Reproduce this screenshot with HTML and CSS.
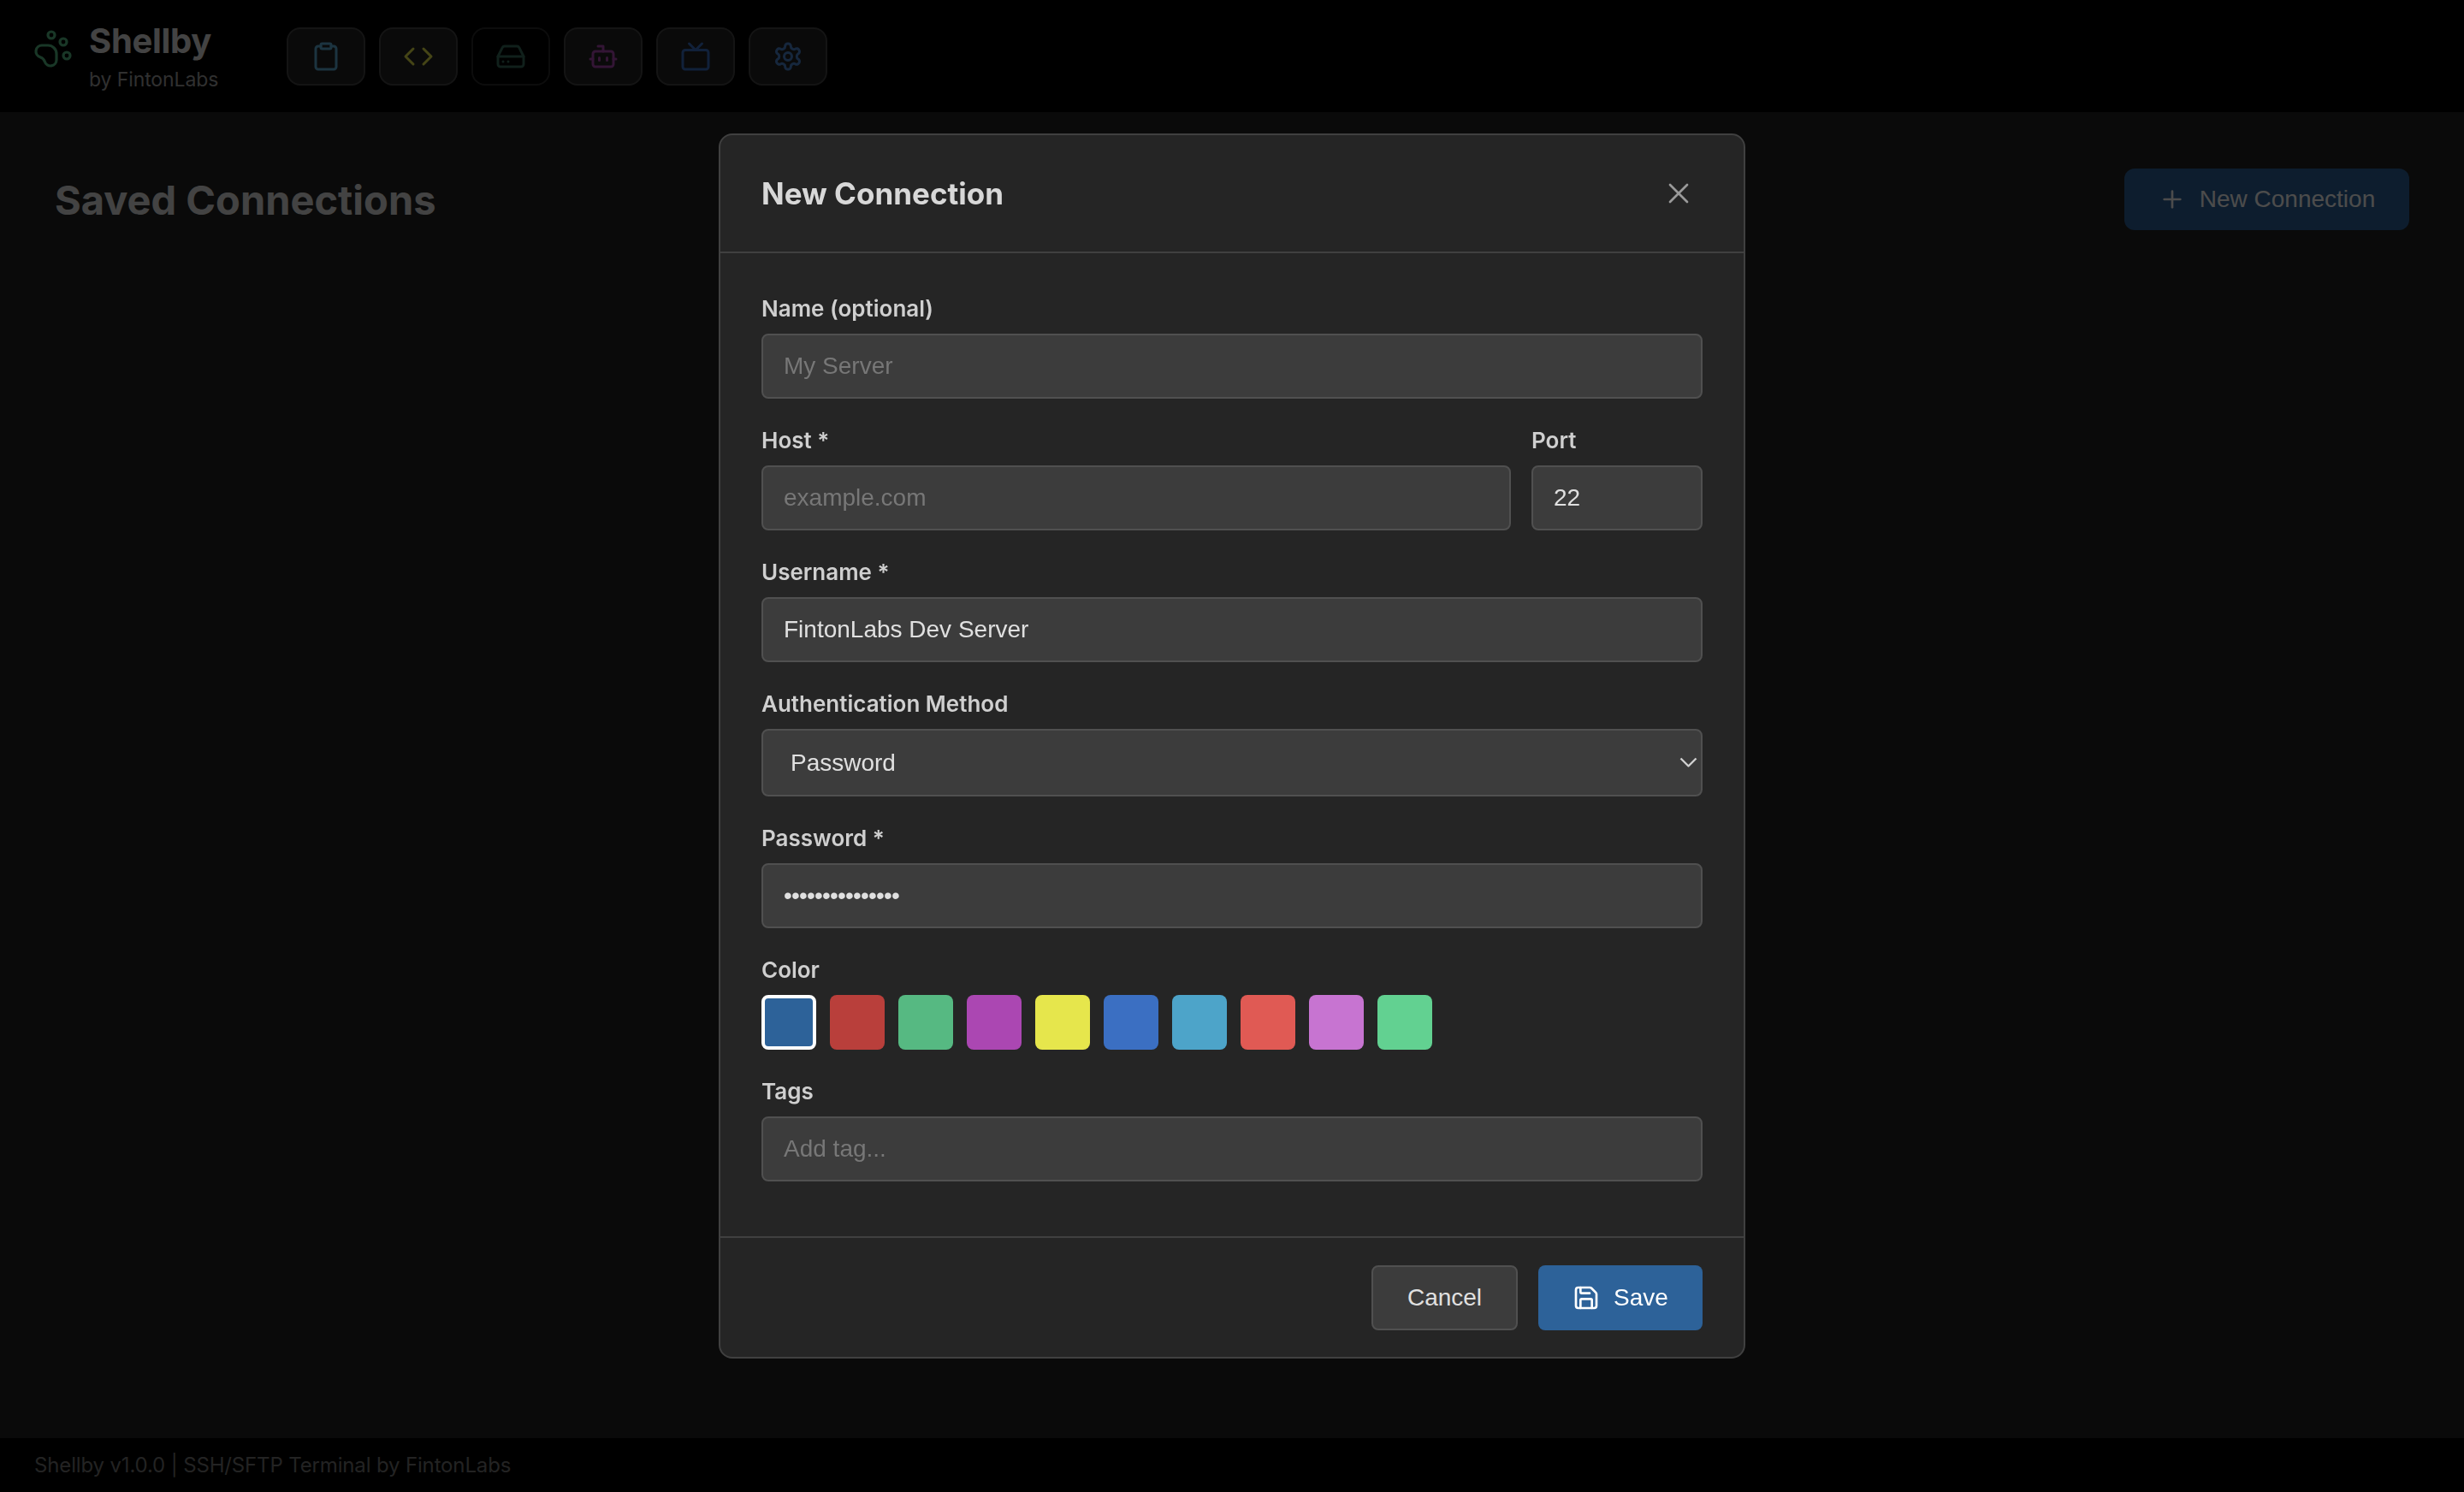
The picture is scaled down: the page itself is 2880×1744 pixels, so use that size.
FILE: index.html
```html
<!DOCTYPE html>
<html lang="en">
<head>
  <meta charset="UTF-8">
  <title>Shellby</title>
  <link rel="stylesheet" href="styles.css">
</head>
<body>

<div class="app">
  <header class="top-bar">
    <div class="brand">
      <svg class="brand-icon" viewBox="0 0 24 24"><circle cx="11" cy="4" r="2"/><circle cx="18" cy="8" r="2"/><circle cx="20" cy="16" r="2"/><path d="M9 10a5 5 0 0 1 5 5v3.5a3.5 3.5 0 0 1-6.84 1.045Q6.52 17.48 4.46 16.84A3.5 3.5 0 0 1 5.5 10Z"/></svg>
      <div class="brand-text">
        <div class="brand-name">Shellby</div>
        <div class="brand-sub">by FintonLabs</div>
      </div>
    </div>
    <nav class="tool-nav">
      <a class="tool-btn tool-clip"><svg viewBox="0 0 24 24"><rect x="8" y="2" width="8" height="4" rx="1"/><path d="M16 4h2a2 2 0 0 1 2 2v14a2 2 0 0 1-2 2H6a2 2 0 0 1-2-2V6a2 2 0 0 1 2-2h2"/></svg></a>
      <a class="tool-btn tool-code"><svg viewBox="0 0 24 24"><polyline points="16 18 22 12 16 6"/><polyline points="8 6 2 12 8 18"/></svg></a>
      <a class="tool-btn tool-drive is-active"><svg viewBox="0 0 24 24"><line x1="22" y1="12" x2="2" y2="12"/><path d="M5.45 5.11 2 12v6a2 2 0 0 0 2 2h16a2 2 0 0 0 2-2v-6l-3.45-6.89A2 2 0 0 0 16.76 4H7.24a2 2 0 0 0-1.79 1.11z"/><line x1="6" y1="16" x2="6.01" y2="16"/><line x1="10" y1="16" x2="10.01" y2="16"/></svg></a>
      <a class="tool-btn tool-bot"><svg viewBox="0 0 24 24"><path d="M12 8V4H8"/><rect x="4" y="8" width="16" height="12" rx="2"/><path d="M2 14h2"/><path d="M20 14h2"/><path d="M15 13v2"/><path d="M9 13v2"/></svg></a>
      <a class="tool-btn tool-tv"><svg viewBox="0 0 24 24"><rect x="2" y="7" width="20" height="15" rx="2"/><polyline points="17 2 12 7 7 2"/></svg></a>
      <a class="tool-btn tool-gear"><svg viewBox="0 0 24 24"><path d="M12.22 2h-.44a2 2 0 0 0-2 2v.18a2 2 0 0 1-1 1.73l-.43.25a2 2 0 0 1-2 0l-.15-.08a2 2 0 0 0-2.73.73l-.22.38a2 2 0 0 0 .73 2.73l.15.1a2 2 0 0 1 1 1.72v.51a2 2 0 0 1-1 1.74l-.15.09a2 2 0 0 0-.73 2.73l.22.38a2 2 0 0 0 2.73.73l.15-.08a2 2 0 0 1 2 0l.43.25a2 2 0 0 1 1 1.73V20a2 2 0 0 0 2 2h.44a2 2 0 0 0 2-2v-.18a2 2 0 0 1 1-1.73l.43-.25a2 2 0 0 1 2 0l.15.08a2 2 0 0 0 2.73-.73l.22-.39a2 2 0 0 0-.73-2.73l-.15-.08a2 2 0 0 1-1-1.74v-.5a2 2 0 0 1 1-1.74l.15-.09a2 2 0 0 0 .73-2.73l-.22-.38a2 2 0 0 0-2.73-.73l-.15.08a2 2 0 0 1-2 0l-.43-.25a2 2 0 0 1-1-1.73V4a2 2 0 0 0-2-2z"/><circle cx="12" cy="12" r="3"/></svg></a>
    </nav>
  </header>

  <main class="content">
    <h1>Saved Connections</h1>
    <button class="btn btn-primary btn-new"><svg class="btn-icon" viewBox="0 0 24 24"><path d="M5 12h14"/><path d="M12 5v14"/></svg>New Connection</button>
  </main>

  <footer class="status-bar">Shellby v1.0.0 | SSH/SFTP Terminal by FintonLabs</footer>
</div>

<!-- modal -->
<div class="overlay">
  <form class="modal">
    <div class="modal-head">
      <h2>New Connection</h2>
      <svg class="modal-close" viewBox="0 0 24 24"><path d="M18 6 6 18"/><path d="m6 6 12 12"/></svg>
    </div>

    <div class="modal-body">
      <div class="field">
        <label>Name (optional)</label>
        <input type="text" placeholder="My Server">
      </div>
      <div class="field-row">
        <div class="field field-grow">
          <label>Host *</label>
          <input type="text" placeholder="example.com">
        </div>
        <div class="field field-port">
          <label>Port</label>
          <input type="text" value="22">
        </div>
      </div>
      <div class="field">
        <label>Username *</label>
        <input type="text" value="FintonLabs Dev Server">
      </div>
      <div class="field">
        <label>Authentication Method</label>
        <div class="select-wrap">
          <select><option>Password</option></select>
          <svg class="select-arrow" viewBox="5 8 14 8"><path d="m6 9 6 6 6-6"/></svg>
        </div>
      </div>
      <div class="field">
        <label>Password *</label>
        <input type="password" value="aaaaaaaaaaaaaaa">
      </div>
      <div class="field">
        <label>Color</label>
        <div class="swatches">
          <span class="swatch swatch-blue is-selected"></span>
          <span class="swatch swatch-red"></span>
          <span class="swatch swatch-green"></span>
          <span class="swatch swatch-purple"></span>
          <span class="swatch swatch-yellow"></span>
          <span class="swatch swatch-royal"></span>
          <span class="swatch swatch-cyan"></span>
          <span class="swatch swatch-coral"></span>
          <span class="swatch swatch-pink"></span>
          <span class="swatch swatch-mint"></span>
        </div>
      </div>
      <div class="field">
        <label>Tags</label>
        <input type="text" placeholder="Add tag...">
      </div>
    </div>

    <div class="modal-foot">
      <button type="button" class="btn btn-cancel">Cancel</button>
      <button type="button" class="btn btn-primary btn-save"><svg class="btn-icon" viewBox="0 0 24 24"><path d="M15.2 3a2 2 0 0 1 1.4.6l3.8 3.8a2 2 0 0 1 .6 1.4V19a2 2 0 0 1-2 2H5a2 2 0 0 1-2-2V5a2 2 0 0 1 2-2z"/><path d="M17 21v-7a1 1 0 0 0-1-1H8a1 1 0 0 0-1 1v7"/><path d="M7 3v4a1 1 0 0 0 1 1h7"/></svg>Save</button>
    </div>
  </form>
</div>

</body>
</html>
```

FILE: styles.css
```css
* { box-sizing: border-box; }
html, body { height: 100%; }
body {
  margin: 0;
  background: #222;
  color: #e0e0e0;
  font-family: "Liberation Sans", Arial, sans-serif;
  font-size: 28px;
}
svg {
  fill: none;
  stroke: currentColor;
  stroke-width: 2;
  stroke-linecap: round;
  stroke-linejoin: round;
}

.app { display: flex; flex-direction: column; height: 100%; }

/* top bar */
.top-bar {
  display: flex;
  align-items: center;
  height: 131px;
  padding: 0 38px;
  background: #000;
  flex-shrink: 0;
}
.brand { display: flex; align-items: center; gap: 18px; width: 297px; }
.brand-icon { width: 48px; height: 48px; color: #56b982; stroke-width: 1.6; margin-top: -18px; flex-shrink: 0; }
.brand-text { font-family: Inter, sans-serif; }
.brand-name { font-size: 40px; line-height: 46px; font-weight: 700; color: #e0e0e0; letter-spacing: -0.3px; }
.brand-sub { font-size: 23px; line-height: 28px; margin-top: 8px; color: #a0a0a0; letter-spacing: -0.1px; }
.tool-nav { display: flex; gap: 16px; }
.tool-btn {
  display: flex;
  align-items: center;
  justify-content: center;
  width: 92px;
  height: 68px;
  background: #222;
  border: 2px solid #444;
  border-radius: 16px;
}
.tool-btn svg { width: 36px; height: 36px; }
.tool-btn.is-active { background: #000; border-color: #2a2a2a; }
.tool-clip { color: #5fb0d8; }
.tool-code { color: #e6e64c; }
.tool-drive { color: #386b5a; }
.tool-bot { color: #ab47b2; }
.tool-tv { color: #3b6fc2; }
.tool-gear { color: #4a84cc; }

/* main area */
.content {
  flex: 1;
  display: flex;
  justify-content: space-between;
  align-items: flex-start;
  padding: 66px 64px 0;
}
.content h1 {
  margin: 0;
  font-family: Inter, sans-serif;
  font-size: 47px;
  line-height: 74px;
  font-weight: 700;
  color: #e0e0e0;
}
.status-bar {
  height: 63px;
  flex-shrink: 0;
  padding: 0 40px;
  background: #000;
  color: #777;
  font-family: Inter, sans-serif;
  font-size: 24px;
  line-height: 63px;
  letter-spacing: -0.15px;
}

/* buttons */
.btn {
  display: inline-flex;
  align-items: center;
  justify-content: center;
  height: 76px;
  border: 2px solid transparent;
  border-radius: 8px;
  font: inherit;
  color: #e0e0e0;
}
.btn-primary { background: #2d6299; color: #fff; }
.btn-icon { width: 32px; height: 32px; flex-shrink: 0; }
.btn-new { width: 333px; height: 72px; gap: 16px; border-radius: 12px; }
.btn-cancel { width: 171px; background: #3c3c3c; border-color: #505050; }
.btn-save { width: 192px; gap: 16px; }

/* modal */
.overlay {
  position: fixed;
  inset: 0;
  display: flex;
  align-items: center;
  justify-content: center;
  background: rgba(0, 0, 0, 0.7);
}
.modal {
  width: 1200px;
  background: #252525;
  border: 2px solid #404040;
  border-radius: 16px;
}
.modal-head {
  display: flex;
  align-items: center;
  justify-content: space-between;
  padding: 38px 48px;
  border-bottom: 2px solid #404040;
}
.modal-head h2 {
  margin: 0;
  font-family: Inter, sans-serif;
  font-size: 35px;
  line-height: 60px;
  font-weight: 700;
  color: #d8d8d8;
}
.modal-close { width: 40px; height: 40px; color: #9a9a9a; stroke-width: 1.6; margin-right: 8px; }
.modal-body { padding: 48px 48px 32px; }
.field { margin-bottom: 32px; }
.field label {
  display: block;
  margin-bottom: 12px;
  font-family: Inter, sans-serif;
  font-size: 26px;
  line-height: 34px;
  font-weight: 600;
  color: #cfcfcf;
}
.field-row { display: flex; gap: 24px; }
.field-grow { flex: 1; }
.field-port { width: 200px; flex-shrink: 0; }
input, select {
  display: block;
  width: 100%;
  height: 76px;
  padding: 0 24px;
  background: #3c3c3c;
  border: 2px solid #505050;
  border-radius: 8px;
  color: #e0e0e0;
  font: inherit;
  outline: none;
}
input::placeholder { color: #777; opacity: 1; }
input[type="password"] { letter-spacing: -0.8px; }
.select-wrap { position: relative; }
select { height: 79px; padding-left: 32px; appearance: none; }
.select-arrow { position: absolute; top: 33px; right: 6px; width: 21px; height: 12px; color: #d0d0d0; stroke-width: 1.6; stroke-linecap: butt; overflow: visible; }
.swatches { display: flex; gap: 16px; }
.swatch { width: 64px; height: 64px; border-radius: 8px; }
.swatch.is-selected { border: 4px solid #fff; }
.swatch-blue { background: #2d6299; }
.swatch-red { background: #b93f3b; }
.swatch-green { background: #56b982; }
.swatch-purple { background: #ab47b2; }
.swatch-yellow { background: #e6e64c; }
.swatch-royal { background: #3b6fc2; }
.swatch-cyan { background: #4da4c9; }
.swatch-coral { background: #e05a54; }
.swatch-pink { background: #c774d1; }
.swatch-mint { background: #62d191; }
.modal-foot {
  display: flex;
  justify-content: flex-end;
  gap: 24px;
  padding: 32px 48px 31px;
  border-top: 2px solid #404040;
}
```
